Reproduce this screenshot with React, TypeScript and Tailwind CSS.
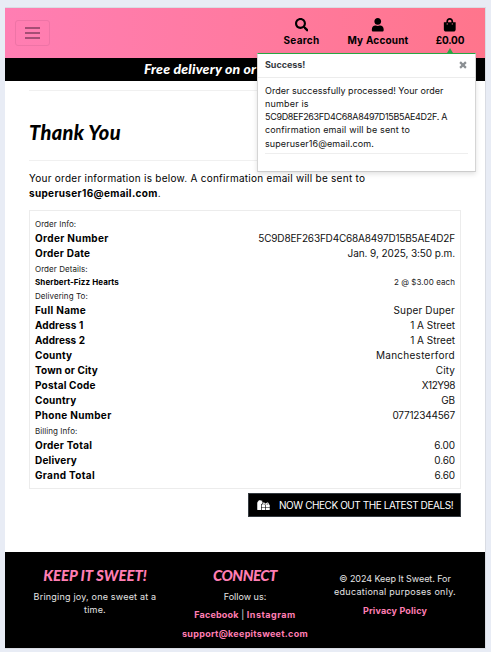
import type { ReactNode } from 'react';
import { FaSearch, FaUser, FaShoppingBag, FaGifts } from 'react-icons/fa';

function NavItem({ icon, label, className }: { icon: ReactNode; label: string; className: string }) {
  return (
    <a className={`flex flex-col items-center text-[10px] font-bold leading-[15px] ${className}`}>
      <span className="flex h-[14px] items-center text-[13.5px]">{icon}</span>
      <span className="mt-px whitespace-nowrap">{label}</span>
    </a>
  );
}

function Heading({ children }: { children: ReactNode }) {
  return <div className="h-[15px] pt-px text-[8px] leading-[15px] tracking-[0.06px] text-[#222]">{children}</div>;
}

function Row({ label, value, labelClass = 'tracking-[0.24px]', valueClass = '' }: { label: string; value: string; labelClass?: string; valueClass?: string }) {
  return (
    <div className="flex h-[15px] justify-between leading-[15px]">
      <span className={`font-bold ${labelClass}`}>{label}</span>
      <span className={`text-[#111] ${valueClass}`}>{value}</span>
    </div>
  );
}

function Toast() {
  return (
    <div className="absolute left-[252px] top-[40px] w-[219px]">
      <div className="ml-[190px] h-[5px] w-[6px] bg-[#28a745] [clip-path:polygon(50%_0,100%_100%,0_100%)]" />
      <div className="h-[119px] border border-t-[#28a745] border-x-[#d5d5d5] border-b-[#ccc] bg-white px-[7px] shadow-[0_2px_5px_rgba(0,0,0,0.12)]">
        <div className="-mx-[7px] flex h-[24px] items-center justify-between border-b border-[#ececec] px-[7px] pb-px">
          <span className="text-[9px] font-bold tracking-[-0.05px] text-[#343a40]">Success!</span>
          <svg className="mr-px" width="8" height="8" viewBox="0 0 8 8">
            <path d="M1.1 1.1 6.9 6.9M6.9 1.1 1.1 6.9" stroke="#8b8f93" strokeWidth="2.2" />
          </svg>
        </div>
        <div className="whitespace-nowrap border-b border-[#eee] pb-[3px] pt-[6px] text-[9px] leading-[13px] text-[#111]">
          <p className="tracking-[0.03px]">Order successfully processed! Your order</p>
          <p className="tracking-[0.17px]">number is</p>
          <p className="tracking-[-0.32px]">5C9D8EF263FD4C68A8497D15B5AE4D2F. A</p>
          <p className="tracking-[0.15px]">confirmation email will be sent to</p>
          <p className="mt-px tracking-[0.09px]">superuser16@email.com.</p>
        </div>
      </div>
    </div>
  );
}

const display = "font-['Lato'] font-black italic";

export default function App() {
  return (
    <div className="h-[652px] w-[491px] overflow-hidden bg-[#e8ecf5] pl-[5px] pt-[7px] font-['Inter',sans-serif] text-[10px] text-black">
      <div className="relative h-[642px] w-[481px] border-b border-r border-t border-[#d9dce3] bg-white">
        <header className="flex h-[50px] w-[480px] items-start bg-linear-to-r from-[#ff7eb3] to-[#ff758c]">
          <button className="ml-[10px] mt-[12px] flex h-[26px] w-[35px] flex-col items-center justify-center gap-[3px] rounded-[3px] border border-[#ee74a6]">
            <span className="h-[2px] w-[15px] bg-[#a54e75]" />
            <span className="h-[2px] w-[15px] bg-[#a54e75]" />
            <span className="h-[2px] w-[15px] bg-[#a54e75]" />
          </button>
          <nav className="ml-[233px] mt-[10px] flex">
            <NavItem className="w-[37px] tracking-[0.27px]" icon={<FaSearch />} label="Search" />
            <NavItem className="ml-[27px] w-[62px] tracking-[0.19px]" icon={<FaUser />} label="My Account" />
            <NavItem className="ml-[26px] w-[30px] tracking-[-0.14px]" icon={<FaShoppingBag />} label="£0.00" />
          </nav>
        </header>
        <div className={`h-[23px] w-[480px] overflow-hidden whitespace-nowrap bg-black pl-[139px] text-[14px] leading-[22px] tracking-[0.2px] text-white ${display}`}>
          Free delivery on or
        </div>

        <main className="h-[471px] px-[24px] pt-[9px]">
          <hr className="w-[432px] border-[#f0f0f0]" />
          <h1 className={`pt-[29px] text-[20px] leading-[24px] tracking-[0.35px] ${display}`}>Thank You</h1>
          <hr className="mt-[16px] w-[432px] border-[#f0f0f0]" />
          <p className="mt-[10px] whitespace-nowrap leading-[15px] tracking-[0.26px]">
            Your order information is below. A confirmation email will be sent to
            <br />
            <b className="tracking-[0.33px]">superuser16@email.com</b>.
          </p>
          <section className="mt-[9px] h-[279px] w-[432px] border border-[#ececec] px-[5px] pt-[5px]">
            <Heading>Order Info:</Heading>
            <Row label="Order Number" value="5C9D8EF263FD4C68A8497D15B5AE4D2F" labelClass="tracking-[0.35px]" valueClass="tracking-[-0.18px]" />
            <Row label="Order Date" value="Jan. 9, 2025, 3:50 p.m." valueClass="tracking-[-0.09px]" />
            <Heading>Order Details:</Heading>
            <div className="flex h-[12px] justify-between text-[8px] leading-[12px] tracking-[0.08px]">
              <b>Sherbert-Fizz Hearts</b>
              <span className="text-[#222]">2 @ $3.00 each</span>
            </div>
            <Heading>Delivering To:</Heading>
            <Row label="Full Name" value="Super Duper" labelClass="tracking-[0.33px]" valueClass="tracking-[0.16px]" />
            <Row label="Address 1" value="1 A Street" labelClass="tracking-[0.09px]" />
            <Row label="Address 2" value="1 A Street" labelClass="tracking-[0.06px]" />
            <Row label="County" value="Manchesterford" valueClass="tracking-[0.26px]" />
            <Row label="Town or City" value="City" labelClass="tracking-[0.12px]" valueClass="tracking-[0.1px]" />
            <Row label="Postal Code" value="X12Y98" labelClass="tracking-[0.2px]" valueClass="tracking-[-0.48px]" />
            <Row label="Country" value="GB" valueClass="tracking-[-0.1px]" />
            <Row label="Phone Number" value="07712344567" labelClass="tracking-[0.32px]" valueClass="tracking-[-0.21px]" />
            <Heading>Billing Info:</Heading>
            <Row label="Order Total" value="6.00" valueClass="tracking-[-0.1px]" />
            <Row label="Delivery" value="0.60" labelClass="tracking-[0.17px]" valueClass="tracking-[-0.1px]" />
            <Row label="Grand Total" value="6.60" labelClass="tracking-[0.33px]" valueClass="tracking-[-0.1px]" />
          </section>
          <a className="ml-[219px] mt-[4px] flex h-[24px] w-[213px] items-center whitespace-nowrap border border-[#343a40] bg-black pl-[8px] tracking-[-0.43px] text-white">
            <FaGifts className="h-[10px] w-[13px]" />
            <span className="ml-[9px]">NOW CHECK OUT THE LATEST DEALS!</span>
          </a>
        </main>

        <footer className="flex h-[96px] w-[480px] bg-black px-[10px] text-center text-[9px] leading-[13px] text-[#e4e4e4]">
          <div className="w-[160px] pt-[14px]">
            <h2 className={`text-[15px] leading-[18px] tracking-[-0.02px] text-[#ff7eb3] ${display}`}>KEEP IT SWEET!</h2>
            <p className="mt-[6px] tracking-[0.2px]">Bringing joy, one sweet at a<br />time.</p>
          </div>
          <div className="w-[140px] whitespace-nowrap pt-[14px]">
            <h2 className={`text-[15px] leading-[18px] tracking-[-0.5px] text-[#ff7eb3] ${display}`}>CONNECT</h2>
            <p className="mt-[6px]">Follow us:</p>
            <p className="mt-[5px]">
              <b className="tracking-[0.19px] text-[#ff7eb3]">Facebook</b> | <b className="tracking-[0.51px] text-[#ff7eb3]">Instagram</b>
            </p>
            <p className="mt-[6px]"><b className="tracking-[0.28px] text-[#ff7eb3]">support@keepitsweet.com</b></p>
          </div>
          <div className="w-[160px] pt-[20px]">
            <p><span className="tracking-[-0.07px]">© 2024 Keep It Sweet. For</span><br /><span className="tracking-[0.28px]">educational purposes only.</span></p>
            <p className="mt-[6px]"><b className="tracking-[0.15px] text-[#ff7eb3]">Privacy Policy</b></p>
          </div>
        </footer>
        <Toast />
      </div>
    </div>
  );
}
